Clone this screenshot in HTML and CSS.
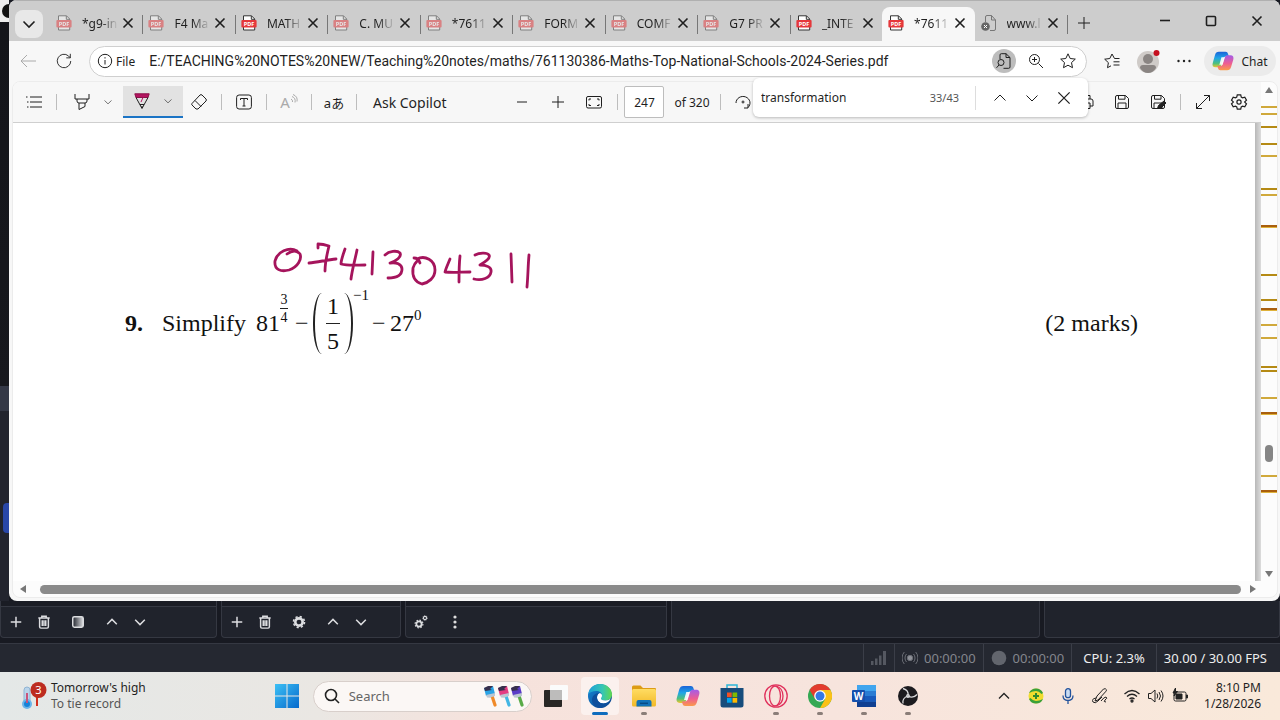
FILE: index.html
```
<!DOCTYPE html>
<html lang="en">
<head>
  <meta charset="UTF-8" />
  <meta name="viewport" content="width=device-width, initial-scale=1" />
  <title>761130386-Maths-Top-National-Schools-2024-Series.pdf</title>
  <link rel="stylesheet" href="styles.css">
</head>
<body>
  <svg class="defs" aria-hidden="true">
    <defs>
      <linearGradient id="cpBlue" x1="0" y1="0" x2="0" y2="1"><stop offset="0" stop-color="#1b63d8"/><stop offset=".4" stop-color="#1fa5e8"/><stop offset=".75" stop-color="#4fc07c"/><stop offset="1" stop-color="#f0c62c"/></linearGradient>
      <linearGradient id="cpPink" x1="0" y1="0" x2="0" y2="1"><stop offset="0" stop-color="#a35be8"/><stop offset=".55" stop-color="#ee5d92"/><stop offset="1" stop-color="#fa9a4a"/></linearGradient>
      <linearGradient id="edgeTop" x1="0" y1="0" x2="1" y2="0"><stop offset="0" stop-color="#1d9fd8"/><stop offset=".6" stop-color="#36c6b4"/><stop offset="1" stop-color="#62d84c"/></linearGradient>
      <linearGradient id="edgeLow" x1="0" y1="0" x2="1" y2="1"><stop offset="0" stop-color="#1689d8"/><stop offset="1" stop-color="#0b3f86"/></linearGradient>
      <linearGradient id="winBlue" x1="0" y1="0" x2="1" y2="1"><stop offset="0" stop-color="#3cc0f5"/><stop offset="1" stop-color="#0669cc"/></linearGradient>
      <linearGradient id="folder" x1="0" y1="0" x2="0" y2="1"><stop offset="0" stop-color="#ffdc62"/><stop offset="1" stop-color="#f2b928"/></linearGradient>
      <linearGradient id="fadeBox"><stop offset="0" stop-color="#20232c"/><stop offset="1" stop-color="#dcdde0"/></linearGradient>
    </defs>
    <symbol id="pdf" viewBox="0 0 16 16"><path d="M2.500 15V.8h8l3.200 3.200V15z" fill="#fff" stroke="#333"/><path d="M10.300.8v3.500h3.500" fill="none" stroke="#333"/><rect x=".4" y="5" width="15.200" height="7.500" rx="1" fill="#e5383b"/><text x="8" y="10.900" font-size="5.500" font-weight="700" text-anchor="middle" fill="#fff">PDF</text></symbol>
    <symbol id="x" viewBox="0 0 16 16"><path d="M3.500 3.500l9 9m0-9l-9 9"/></symbol>
    <symbol id="down" viewBox="0 0 16 16"><path d="M2.500 5.500L8 11l5.500-5.500"/></symbol>
    <symbol id="up" viewBox="0 0 16 16"><path d="M2.500 10.500L8 5l5.500 5.500"/></symbol>
    <symbol id="plus" viewBox="0 0 16 16"><path d="M8 2v12M2 8h12"/></symbol>
    <symbol id="trash" viewBox="0 0 16 16"><path d="M1.500 3.500h13M5.500 3V1.500h5V3M3 4v9.500q0 1.500 1.500 1.500h7q1.500 0 1.500-1.500V4M6 6v6.500M8 6v6.500M10 6v6.500"/></symbol>
    <symbol id="gear" viewBox="0 0 24 24"><path d="M9.700 2.500h4.600l.7 3 1.700 1 3-.9 2.300 4-2.300 2.100v.6l2.300 2.100-2.300 4-3-.9-1.700 1-.7 3H9.700l-.7-3-1.700-1-3 .9-2.300-4 2.300-2.100v-.6L2 9.600l2.300-4 3 .9 1.700-1z"/><circle cx="12" cy="12" r="2.800"/></symbol>
    <symbol id="cog" viewBox="0 0 16 16"><circle cx="8" cy="8" r="4.200" fill="none" stroke="currentColor" stroke-width="3"/><circle cx="8" cy="8" r="6.300" fill="none" stroke="currentColor" stroke-width="1.800" stroke-dasharray="2.500 2.450"/></symbol>
    <symbol id="save" viewBox="0 0 16 16"><path d="M1.500 3q0-1.500 1.500-1.500h8.500l3 3V13q0 1.500-1.500 1.500H3q-1.500 0-1.500-1.500zM4.500 1.500v3.700h6.500V1.500M4 14.500V9h8v5.500"/></symbol>
    <symbol id="copilot" viewBox="0 0 24 24"><path d="M7.500 2h7.200c2 0 2.500 1.300 3 3l.8 2.200h-3.300c-1.700 0-2.600.8-3.100 2.500L10 16.500c-.6 1.800-1.600 2.400-3.300 2.400H4c-3 0-4-2-3.200-4.800l2.400-8.500C4 3.100 5.200 2 7.500 2z" fill="url(#cpBlue)"/><path d="M16.500 22H9.300c-2 0-2.500-1.300-3-3l-.4-1.500h2.900c1.700 0 2.600-.8 3.100-2.500L14 8.100c.6-1.800 1.600-2.400 3.300-2.400H20c3 0 4 2 3.200 4.800l-2.400 8C20 20.900 18.800 22 16.500 22z" fill="url(#cpPink)"/><path d="M10.300 8h3.500l-2.500 8H8z" fill="#fff" opacity=".9"/></symbol>
    <symbol id="brush" viewBox="0 0 12 22"><path d="M0 3l9-2 2 8-9 2z" fill="currentColor"/><path d="M0 3l4-2 5 0-3 3 2 1-7 1z" fill="#37304d"/><path d="M2 10l9-2v3l-3 1-2 .8-3-.3z" fill="#bcc6d2"/></symbol>
  </svg>

  <div class="stage">
    <div class="behind"><i class="app-logo"></i><i class="panel"></i><i class="selected"></i></div>
    <main class="window">
      <header class="tabstrip">
        <button class="tab-menu" aria-label="Tab actions"><svg class="ic bold"><use href="#down"/></svg></button>
        <nav class="tabs">
          <div class="tab dim"><svg class="fav"><use href="#pdf"/></svg><span>*g9-in</span><button aria-label="Close"><svg class="ic bold"><use href="#x"/></svg></button></div>
          <div class="tab dim"><svg class="fav"><use href="#pdf"/></svg><span>F4 Ma</span><button aria-label="Close"><svg class="ic bold"><use href="#x"/></svg></button></div>
          <div class="tab"><svg class="fav"><use href="#pdf"/></svg><span>MATH</span><button aria-label="Close"><svg class="ic bold"><use href="#x"/></svg></button></div>
          <div class="tab dim"><svg class="fav"><use href="#pdf"/></svg><span>C. MU</span><button aria-label="Close"><svg class="ic bold"><use href="#x"/></svg></button></div>
          <div class="tab dim"><svg class="fav"><use href="#pdf"/></svg><span>*7611</span><button aria-label="Close"><svg class="ic bold"><use href="#x"/></svg></button></div>
          <div class="tab dim"><svg class="fav"><use href="#pdf"/></svg><span>FORM</span><button aria-label="Close"><svg class="ic bold"><use href="#x"/></svg></button></div>
          <div class="tab dim"><svg class="fav"><use href="#pdf"/></svg><span>COMF</span><button aria-label="Close"><svg class="ic bold"><use href="#x"/></svg></button></div>
          <div class="tab dim"><svg class="fav"><use href="#pdf"/></svg><span>G7 PR</span><button aria-label="Close"><svg class="ic bold"><use href="#x"/></svg></button></div>
          <div class="tab plain"><svg class="fav"><use href="#pdf"/></svg><span>_INTE</span><button aria-label="Close"><svg class="ic bold"><use href="#x"/></svg></button></div>
          <div class="tab active"><svg class="fav"><use href="#pdf"/></svg><span>*7611</span><button aria-label="Close"><svg class="ic bold"><use href="#x"/></svg></button></div>
          <div class="tab"><svg class="fav" viewBox="0 0 16 16" fill="none" stroke="#777"><path d="M4.500 7V2q0-1.500 1.500-1.500h4.500L14.500 5v9q0 1.500-1.500 1.500H9M10.500.5V5h4"/><circle cx="4.500" cy="11.500" r="4.300" fill="#666" stroke="none"/><path d="M3 10l3 3m0-3l-3 3" stroke="#fff"/></svg><span>www.l</span><button aria-label="Close"><svg class="ic bold"><use href="#x"/></svg></button></div>
        </nav>
        <button class="new-tab" aria-label="New tab"><svg class="ic"><use href="#plus"/></svg></button>
        <div class="caption">
          <button aria-label="Minimize"><svg class="ic bold" viewBox="0 0 16 16"><path d="M3 7.500h10"/></svg></button>
          <button aria-label="Maximize"><svg class="ic bold" viewBox="0 0 16 16"><rect x="3.500" y="3.500" width="9" height="9" rx="1"/></svg></button>
          <button aria-label="Close window"><svg class="ic bold"><use href="#x"/></svg></button>
        </div>
      </header>

      <div class="address">
        <button class="off" aria-label="Back"><svg class="ic" viewBox="0 0 16 16"><path d="M16 8H1m6-6L1 8l6 6"/></svg></button>
        <button aria-label="Refresh"><svg class="ic lg" viewBox="0 0 20 20"><path d="M17.500 10a7.500 7.500 0 1 1-2.500-5.600l2 2M17 2v4.500h-4.500"/></svg></button>
        <div class="omnibox">
          <svg class="ic" viewBox="0 0 16 16"><circle cx="8" cy="8" r="6.700"/><path d="M8 7v4.500M8 4.200v1.300"/></svg>
          <label for="url">File</label>
          <input id="url" type="text" value="E:/TEACHING%20NOTES%20NEW/Teaching%20notes/maths/761130386-Maths-Top-National-Schools-2024-Series.pdf">
          <button class="round" aria-label="Find on page"><svg class="ic" viewBox="0 0 16 16"><path d="M4 6V2q0-1.300 1.300-1.300H10L14 4.500V14q0 1.300-1.300 1.300H7.500M10 .7v3.800h4"/><circle cx="5" cy="9.500" r="3"/><path d="M3 12l-2.500 2.800"/></svg></button>
          <button aria-label="Zoom"><svg class="ic" viewBox="0 0 16 16"><circle cx="6.500" cy="6.500" r="5"/><path d="M10.500 10.500L15 15M6.500 4v5M4 6.500h5"/></svg></button>
          <button aria-label="Add to favorites"><svg class="ic" viewBox="0 0 16 16"><path d="M8 .8l2.200 4.700 5.100.6-3.800 3.500 1 5.100L8 12.200l-4.500 2.500 1-5.100L.7 6.100l5.100-.6z"/></svg></button>
        </div>
        <button aria-label="Favorites"><svg class="ic" viewBox="0 0 16 16"><path d="M15.500 5.500h-5L8 1 5.800 5.500.7 6.200l3.700 3.500-.9 5L7 12.800M9.500 8.800h6M9.500 12h6"/></svg></button>
        <button class="profile" aria-label="Profile"><svg viewBox="0 0 24 24"><circle cx="12" cy="13" r="11" fill="#cfcbc8"/><circle cx="12" cy="10" r="5" fill="#8a8583"/><path d="M4 19q0-3 3-3h10q3 0 3 3-3 5-8 5t-8-5z" fill="#8a8583"/><circle cx="20.500" cy="4" r="3" fill="#c50f1f"/></svg></button>
        <button aria-label="Settings and more"><svg class="ic" viewBox="0 0 16 16"><g fill="#222" stroke="none"><circle cx="2.500" cy="8" r="1.200"/><circle cx="8" cy="8" r="1.200"/><circle cx="13.500" cy="8" r="1.200"/></g></svg></button>
        <button class="chat"><svg><use href="#copilot"/></svg>Chat</button>
      </div>

      <section class="viewer">
        <div class="document">
          <div class="toolbar">
            <button aria-label="Contents"><svg class="ic" viewBox="0 0 16 16"><path d="M4 3h12M4 8h12M4 13h12M0 3h1.500M1 8h1.500M1 13h1.500"/></svg></button>
            <hr>
            <button class="split" aria-label="Highlight"><svg class="ic" viewBox="0 0 16 16"><path d="M1 0v5h14V0M3 5v2q0 2 2 2h6q2 0 2-2V5M5 9v6.500l6-3V9"/></svg><svg class="ic sm"><use href="#down"/></svg></button>
            <button class="split on" aria-label="Draw"><svg class="ic" viewBox="0 0 16 16"><path d="M.8.800h14.400L14 4.500H2z" fill="#b31560" stroke="#8c1049"/><path d="M2 4.500l6 11 6-11M6 11.500h4M8 13v2"/><path d="M9 4.500L7 9" stroke="#b31560"/></svg><svg class="ic sm"><use href="#down"/></svg></button>
            <button aria-label="Erase"><svg class="ic" viewBox="0 0 16 16"><path d="M1 9.500L9 1q1-.8 2 0l4 4q.8 1 0 2l-8 8H5l-4-4q-.7-.8 0-1.500zM4 6.500l6 6"/></svg></button>
            <hr>
            <button aria-label="Add text"><svg class="ic" viewBox="0 0 16 16"><rect x=".6" y="1" width="14.800" height="14" rx="2.500"/><path d="M4.500 6V4.500h7V6M8 4.500V12M6.500 12h3"/></svg></button>
            <hr>
            <button class="off read" aria-label="Read aloud">A<svg viewBox="0 0 8 10" fill="none" stroke="#aaa"><path d="M1 5q2 1 1.500 3M2 2.500q4 1.500 3 6M3 .5q5 2 4 7"/></svg></button>
            <hr>
            <button class="translate" aria-label="Translate">aあ</button>
            <hr>
            <button class="ask">Ask Copilot</button>
            <div class="zooming">
              <button aria-label="Zoom out"><svg class="ic" viewBox="0 0 16 16"><path d="M3 8h10"/></svg></button>
              <button aria-label="Zoom in"><svg class="ic"><use href="#plus"/></svg></button>
              <button aria-label="Fit to page"><svg class="ic" viewBox="0 0 16 16"><rect x=".5" y="2.500" width="15" height="11.500" rx="1.500"/><path d="M3 6.500V5h2M11 5h2v1.500M13 10v1.500h-2M5 11.500H3V10"/></svg></button>
              <hr>
              <input id="page" type="text" value="247"><label for="page">of 320</label>
              <hr>
              <button class="rotate" aria-label="Rotate"><svg class="ic" viewBox="0 0 16 16"><path d="M1 9a7 6.500 0 1 1 12 4.500M13 10v4H9"/><circle cx="8" cy="8" r="1"/></svg></button>
            </div>
            <div class="file-tools">
              <button aria-label="Print"><svg class="ic" viewBox="0 0 16 16"><path d="M4 5V1.500h8V5M4 12H1V7q0-2 2-2h10q2 0 2 2v5h-3M4 9h8v5.500H4z"/></svg></button>
              <button aria-label="Save"><svg class="ic"><use href="#save"/></svg></button>
              <button aria-label="Save as"><svg class="ic" viewBox="0 0 16 16"><use href="#save"/><path d="M7.500 14.500l1-3L14 7l2 2-5 5z" fill="#222"/></svg></button>
              <hr>
              <button aria-label="Full screen"><svg class="ic" viewBox="0 0 16 16"><path d="M1.500 14.500l13-13M9 1.500h5.500V7M1.500 9v5.500H7"/></svg></button>
              <button class="prefs" aria-label="Settings"><svg class="ic lg"><use href="#gear"/></svg></button>
            </div>
          </div>

          <div class="canvas">
            <article class="sheet">
              <svg class="ink" viewBox="272 240 264 50" role="img" aria-label="0741304311">
                <path d="M287 253c4-3 9-4 12-1M297 250c-8-5-20 1-22 10-1 9 6 11 14 9 9-3 13-11 11-16"/>
                <path d="M318 247v-4c4 0 8 1 11 2-2 8-4 17-4 25M309 262c9-1 18-3 27-4"/>
                <path d="M345 248c-2 6-4 11-4 15 7 2 16 1 24 1M357 249c-2 10-5 20-6 29"/>
                <path d="M373 251l-1 22"/>
                <path d="M385 254c4-4 12-5 15-2 2 4-4 8-10 10 6-1 12 1 12 6 0 7-7 9-14 9"/>
                <path d="M414 257c3 0 5 2 6 5M417 258c8-4 18 1 18 11 0 8-7 13-13 14-7-2-10-8-9-16 1-4 3-6 5-8"/>
                <path d="M450 258c-2 5-4 9-5 13 8 1 17 0 25 0M460 255c-1 9-1 18-1 26"/>
                <path d="M475 254c4-2 12-3 14 0s-4 7-9 10c6 0 12 2 11 7-1 6-9 9-17 7"/>
                <path d="M511 253l1 28M529 254c-1 11-1 21-2 32"/>
              </svg>
              <div class="question">
                <b>9.</b>
                <span class="word">Simplify</span>
                <span class="math">
                  <span>81</span>
                  <span class="frac power"><span>3</span><span>4</span></span>
                  <span class="op">−</span>
                  <span class="paren open"></span>
                  <span class="frac"><span>1</span><span>5</span></span>
                  <span class="paren close"></span>
                  <span class="exp high">−1</span>
                  <span class="op">−</span>
                  <span>27</span>
                  <span class="exp">0</span>
                </span>
                <span class="marks">(2 marks)</span>
              </div>
            </article>
          </div>
          <div class="hscroll"><i class="arrow left"></i><i class="thumb"></i><i class="arrow right"></i></div>
        </div>

        <div class="vscroll">
          <i class="arrow top"></i>
          <div class="hits">
            <i style="top:5.2%"></i><i style="top:6.6%"></i><i class="dark" style="top:9.2%"></i><i class="dark" style="top:12.6%"></i><i style="top:15%"></i>
            <i class="dark" style="top:21.5%"></i><i style="top:22.7%"></i><i class="deep" style="top:29%"></i><i class="dark" style="top:38.8%"></i>
            <i class="dark" style="top:43.7%"></i><i class="deep" style="top:45.5%"></i><i style="top:48.8%"></i><i style="top:51.2%"></i>
            <i class="dark" style="top:57%"></i><i class="dark" style="top:57.9%"></i><i style="top:63.2%"></i><i class="deep" style="top:66.3%"></i>
            <i style="top:78.8%"></i><i class="deep" style="top:81.8%"></i>
            <b class="grip" style="top:72.9%"></b>
          </div>
          <i class="arrow bottom"></i>
        </div>
      </section>

      <form class="findbar">
        <input type="text" aria-label="Find on page" value="transformation">
        <span>33/43</span>
        <hr>
        <button type="button" aria-label="Previous"><svg class="ic"><use href="#up"/></svg></button>
        <button type="button" aria-label="Next"><svg class="ic"><use href="#down"/></svg></button>
        <button type="button" aria-label="Close find"><svg class="ic big"><use href="#x"/></svg></button>
      </form>
    </main>
  </div>

  <section class="docks">
    <div class="dock scenes">
      <button aria-label="Add scene"><svg class="ic"><use href="#plus"/></svg></button>
      <button aria-label="Remove scene"><svg class="ic"><use href="#trash"/></svg></button>
      <button class="wide" aria-label="Scene filters"><svg class="ic" viewBox="0 0 16 16"><rect x="2" y="2" width="12" height="12" rx="2" fill="url(#fadeBox)"/></svg></button>
      <button aria-label="Move up"><svg class="ic"><use href="#up"/></svg></button>
      <button aria-label="Move down"><svg class="ic"><use href="#down"/></svg></button>
    </div>
    <div class="dock sources">
      <button aria-label="Add source"><svg class="ic"><use href="#plus"/></svg></button>
      <button aria-label="Remove source"><svg class="ic"><use href="#trash"/></svg></button>
      <button class="wide" aria-label="Properties"><svg class="ic"><use href="#cog"/></svg></button>
      <button aria-label="Move up"><svg class="ic"><use href="#up"/></svg></button>
      <button aria-label="Move down"><svg class="ic"><use href="#down"/></svg></button>
    </div>
    <div class="dock mixer">
      <button aria-label="Advanced audio"><svg class="ic" viewBox="0 0 16 16"><use href="#cog" x="1" y="5" width="10" height="10"/><use href="#cog" x="9" y="1" width="6" height="6"/></svg></button>
      <button class="wide" aria-label="Mixer menu"><svg class="ic" viewBox="0 0 16 16"><g fill="#ddd" stroke="none"><circle cx="8" cy="3" r="1.600"/><circle cx="8" cy="8" r="1.600"/><circle cx="8" cy="13" r="1.600"/></g></svg></button>
    </div>
    <div class="dock transitions"></div>
    <div class="dock controls"></div>
  </section>

  <section class="status">
    <div class="cell"><svg viewBox="0 0 16 16" fill="#555861"><path d="M0 11h2.500v4H0zM4 8.500h2.500V15H4zM8 5.500h2.500V15H8zM12 1h3v14h-3z"/></svg></div>
    <div class="cell muted"><svg viewBox="0 0 16 16" fill="none" stroke="#6b6e76"><circle cx="8" cy="8" r="2.700" fill="#8f9198"/><path d="M4.500 4a6 6 0 0 0 0 8M11.500 4a6 6 0 0 1 0 8M2.300 2a9 9 0 0 0 0 12M13.700 2a9 9 0 0 1 0 12"/></svg>00:00:00</div>
    <div class="cell muted"><svg viewBox="0 0 16 16"><circle cx="8" cy="8" r="7.300" fill="#62656d"/></svg>00:00:00</div>
    <div class="cell cpu">CPU: 2.3%</div>
    <div class="cell fps">30.00 / 30.00 FPS</div>
  </section>

  <footer class="taskbar">
    <button class="weather">
      <svg viewBox="-3 0 28 28"><rect x="2" y="5" width="6" height="17" rx="3" fill="#b9d4ea" stroke="#8fb4d3"/><circle cx="5" cy="22" r="5" fill="#69b4ea"/><circle cx="5" cy="22" r="3" fill="#1683d8"/><path d="M5 11v10" stroke="#c9547b" stroke-width="2"/><path d="M15 14v10" stroke="#d3301f" stroke-width="2"/><circle cx="16.500" cy="8" r="8" fill="#bd2c20"/><text x="16.500" y="12" font-size="11" text-anchor="middle" fill="#fff">3</text></svg>
      <span>Tomorrow's high<br><small>To tie record</small></span>
    </button>
    <div class="apps">
      <button aria-label="Start"><svg viewBox="0 0 24 24" fill="url(#winBlue)"><path d="M0 0h11.500v11.500H0zM12.500 0H24v11.500H12.500zM0 12.500h11.500V24H0zM12.500 12.500H24V24H12.500z"/></svg></button>
      <div class="search">
        <svg viewBox="0 0 16 16" fill="none" stroke="#222" stroke-width="1.600"><circle cx="7" cy="7" r="5.500"/><path d="M11 11l4 4"/></svg>
        <input type="text" aria-label="Search" placeholder="Search">
        <svg class="brushes" viewBox="0 0 40 22"><g stroke-width="3.200" stroke-linecap="round"><path d="M8 11l3 9" stroke="#f08a28"/><path d="M22 11l3 9" stroke="#43b6e4"/><path d="M35 11l3 9" stroke="#58ab48"/></g><use href="#brush" x="0" width="12" height="22" color="#29a3e6"/><use href="#brush" x="14" width="12" height="22" color="#e43c83"/><use href="#brush" x="27" width="12" height="22" color="#5a3cc8"/></svg>
      </div>
      <button aria-label="Task view"><svg viewBox="0 0 24 24"><rect x="0" y="6" width="18" height="17" rx="1" fill="#292725"/><rect x="6" y="1" width="18" height="15" rx="1" fill="#fbfbfb"/><path d="M6 6h12v10H6z" fill="#bdbcbb"/></svg></button>
      <button class="current" aria-label="Edge"><svg viewBox="0 0 24 24"><circle cx="12" cy="12" r="12" fill="url(#edgeLow)"/><path d="M.2 10C1.500 3.500 6.500 0 12 0c7 0 12 5 12 10.500 0 3.800-3 6-6.500 6-3 0-4.500-1-4.500-2 0-.7 1-1.200 1-3C14 9 11.500 7 8.300 7 4.500 7 1.500 8.500.2 10z" fill="url(#edgeTop)"/><path d="M14 11.500c0 1.800-1 2.300-1 3 0 1 1.500 2 4.500 2 2.200 0 4-.7 5.200-2-1.500 3.300-4.200 4.900-7.200 4.900-4.500 0-6.500-3.400-6.500-6 0-2.300 1.300-3.700 2.700-4.300 1.500.5 2.300 1.400 2.300 2.400z" fill="#fff"/><path d="M9 13.400c0 2.600 2 6 6.500 6 3 0 5.200-1 6.700-3C20 21 16 24 12 24c-5 0-8-4-8-8 0-4 3.300-7 7.700-6.900C10.300 9.700 9 11.100 9 13.400z" fill="#0e4f9c"/></svg></button>
      <button class="open" aria-label="File Explorer"><svg viewBox="0 0 24 24"><path d="M0 3q0-1.500 1.500-1.500h7L11 4h12q1 0 1 1v6H0z" fill="#dd9c14"/><rect y="5" width="24" height="17.500" rx="1.500" fill="url(#folder)"/><path d="M4.500 22.500V18q0-2 2-2h11q2 0 2 2v4.500z" fill="#1272b8"/><path d="M8 19.300h8" stroke="#074b86" stroke-width="1.500"/></svg></button>
      <button aria-label="Copilot"><svg><use href="#copilot"/></svg></button>
      <button aria-label="Store"><svg viewBox="0 0 24 24"><path d="M7 5V1h10v4" fill="none" stroke="#2cb5d8" stroke-width="1.500"/><path d="M.5 4h23v17q0 2.500-2.500 2.500H3Q.5 23.500.5 21z" fill="#174c7c"/><path d="M7 8.500h4.700v4.700H7z" fill="#f25022"/><path d="M12.500 8.500h4.700v4.700h-4.700z" fill="#7fba00"/><path d="M7 14h4.700v4.700H7z" fill="#00a4ef"/><path d="M12.500 14h4.700v4.700h-4.700z" fill="#ffb900"/></svg></button>
      <button class="open" aria-label="Opera GX"><svg viewBox="0 0 24 24" fill="none" stroke="#e0315c" stroke-width="1.300"><circle cx="12" cy="12" r="11.200"/><ellipse cx="11" cy="12" rx="5.500" ry="10"/><path d="M12 2q7 2 7 10t-7 10"/></svg></button>
      <button class="open" aria-label="Chrome"><svg viewBox="0 0 24 24"><circle cx="12" cy="12" r="12" fill="#34a853"/><path d="M1.600 6A12 12 0 0 1 22.400 6H12L7 15z" fill="#e33b2e"/><path d="M22.400 6A12 12 0 0 1 12 24l5.200-9L12 6z" fill="#fbc116"/><circle cx="12" cy="12" r="5.800" fill="#fff"/><circle cx="12" cy="12" r="4.500" fill="#3578e5"/></svg></button>
      <button class="open" aria-label="Word"><svg viewBox="0 0 24 24"><rect x="5" y="1" width="19" height="22" rx="1.500" fill="#2b7cd3"/><path d="M5 1h19v6H5z" fill="#41a5ee"/><path d="M5 17.500h19V23H5z" fill="#103f91"/><path d="M5 12h19v5.500H5z" fill="#185abd"/><rect y="6" width="13" height="12" rx="1" fill="#1550ad"/><text x="6.500" y="15.500" font-size="10" font-weight="700" text-anchor="middle" fill="#fff">W</text></svg></button>
      <button class="open" aria-label="OBS Studio"><svg viewBox="0 0 24 24"><circle cx="12" cy="12" r="10" fill="#1c1b1f"/><g fill="none" stroke="#d8d8da" stroke-width="1.300"><path d="M12 12q1-6-5-7.500M12 12q5 3 9-1.500M12 12q-6 2-5 7.500"/><circle cx="12" cy="12" r="1.300"/></g></svg></button>
    </div>
    <div class="tray">
      <svg viewBox="0 0 16 16" fill="none" stroke="#222" stroke-width="1.300"><path d="M3 10.500l5-5 5 5"/></svg>
      <svg viewBox="0 0 16 16"><circle cx="8" cy="8" r="7.500" fill="#f1dc2e"/><path d="M1 5Q3 .5 8 .5q5 0 7 4.500l-1.500 1Q11 3 8 3 5 3 1 5zM15 11q-2 4.500-7 4.500-5 0-7-4.500l1.500-1Q5 13 8 13q3 0 7-2z" fill="#3aa03a"/><path d="M8 5v6M5 8h6" stroke="#2f8a2d" stroke-width="2"/></svg>
      <svg viewBox="0 0 16 16" fill="none" stroke="#23539c" stroke-width="1.300"><rect x="5.500" y=".7" width="5" height="9" rx="2.500" fill="#c9dcf2"/><path d="M3 7.500q0 5 5 5t5-5M8 12.500V16"/></svg>
      <svg viewBox="0 0 16 16" fill="none" stroke="#222"><path d="M5 8l6.500-7q2-1 3 .8 0 1-1 2L6 12l-3 1zM4 10q-5 1-3 4 2 2 5-1l4-4M9 13q3-4 5-4 2 1-1 3-2 2 1 2"/></svg>
      <span class="quick">
        <svg viewBox="0 0 16 16" fill="none" stroke="#222" stroke-width="1.300"><path d="M.5 6Q8-1 15.500 6M3 8.500Q8 4 13 8.500M5.500 11Q8 9 10.500 11"/><circle cx="8" cy="13" r="1"/></svg>
        <svg viewBox="0 0 16 16" fill="none" stroke="#222"><path d="M.5 5.500H3L7 2v12l-4-3.500H.5zM9 5.500q1.500 2.500 0 5M11 4q3 4 0 8M13 2.500q4 5.500 0 11"/></svg>
        <svg viewBox="0 0 16 16" fill="none" stroke="#222"><rect x="2" y="4" width="12" height="9" rx="1.500"/><path d="M14.500 7v3h1V7z"/><path d="M4 6h6v5H4z" fill="#222"/><path d="M3.500 0L1 5h2L2 8l3.500-4.500h-2z" fill="#222"/></svg>
      </span>
      <time datetime="2026-01-28T20:10">8:10 PM<br>1/28/2026</time>
    </div>
  </footer>
</body>
</html>
```
FILE: styles.css
```
* {
  box-sizing: border-box;
}
body {
  margin: 0;
  min-height: 100vh;
  display: flex;
  flex-direction: column;
  font-family: "Noto Sans", "Noto Sans CJK JP", sans-serif;
  font-size: 12px;
  color: #1f1f1f;
  background: #181a22;
}
button, input {
  font: inherit;
  color: inherit;
  background: none;
  border: none;
  padding: 0;
  outline: none;
}
button {
  display: flex;
  align-items: center;
  justify-content: center;
  flex: none;
}
hr {
  width: 1px;
  height: 16px;
  margin: 0 6px;
  border: none;
  background: #bdbdbd;
  flex: none;
}
i {
  display: block;
}
.defs {
  position: absolute;
  width: 0;
  height: 0;
}
.ic {
  width: 16px;
  height: 16px;
  flex: none;
  fill: none;
  stroke: currentColor;
  stroke-width: 1;
}
.ic.bold {
  stroke-width: 1.6;
}
.ic.sm {
  width: 10px;
  height: 10px;
}
.ic.lg {
  width: 18px;
  height: 18px;
}
.ic.big {
  width: 20px;
  height: 20px;
}
.off {
  color: #aaa;
}

/* window area */
.stage {
  flex: 1;
  display: flex;
  min-width: 0;
}
.behind {
  width: 9px;
  flex: none;
  display: flex;
  flex-direction: column;
  background: linear-gradient(#ededed 22px, #14151a 22px, #17181d 65%, #22242e 68%);
  overflow: hidden;
}
.behind .app-logo {
  width: 14px;
  height: 14px;
  margin: 4px 0 0 2px;
  border-radius: 50%;
  background: #111;
  flex: none;
}
.behind .panel {
  height: 25px;
  margin-top: 368px;
  background: #343846;
}
.behind .selected {
  height: 30px;
  margin: 92px 0 0 3px;
  border-radius: 4px 0 0 4px;
  background: #2947a9;
}
.window {
  position: relative;
  flex: 1;
  min-width: 0;
  display: flex;
  flex-direction: column;
  background: #f7f7f7;
  border-radius: 8px;
  overflow: hidden;
}

/* tabs */
.tabstrip {
  display: flex;
  height: 41px;
  padding-left: 6px;
  background: #cdcdcd;
  border-top: 1px solid #b0b0b0;
}
.tab-menu {
  width: 28px;
  height: 28px;
  margin: 9px 7px 0 0;
  border-radius: 8px;
  background: #e8e8e8;
}
.tabs {
  flex: 1;
  display: flex;
  min-width: 0;
  padding-top: 6px;
}
.tab {
  flex: 1;
  min-width: 0;
  display: flex;
  align-items: center;
  padding-left: 6px;
  padding-bottom: 2px;
  position: relative;
}
.tab::after {
  content: "";
  position: absolute;
  right: -1px;
  top: 8px;
  width: 1px;
  height: 19px;
  background: #777;
}
.tab.active::after, .tab.plain::after {
  display: none;
}
.tab span {
  width: 38px;
  margin-left: 10px;
  flex: none;
  white-space: nowrap;
  mask-image: linear-gradient(90deg, #000 50%, transparent 95%);
}
.tab.active {
  background: #f7f7f7;
  border-radius: 8px 8px 0 0;
}
.fav {
  width: 16px;
  height: 16px;
  flex: none;
}
.tab.dim .fav {
  opacity: 0.5;
}
.new-tab {
  width: 34px;
  padding-top: 4px;
}
.caption {
  display: flex;
  width: 179px;
  padding: 0 0 0 41px;
}
.caption button {
  width: 46px;
}

/* address bar */
.address {
  display: flex;
  align-items: center;
  height: 40px;
  padding: 0 4px 0 1px;
}
.address > button {
  width: 36px;
  height: 30px;
}
.omnibox {
  flex: 1;
  min-width: 0;
  display: flex;
  align-items: center;
  height: 31px;
  margin: 0 7px;
  padding-left: 7px;
  padding-right: 2px;
  background: #fff;
  border: 1px solid #cfcfcf;
  border-radius: 16px;
}
.omnibox label {
  margin: 0 14px 0 3px;
}
.omnibox input {
  flex: 1;
  min-width: 0;
  font-family: Roboto, sans-serif;
  font-size: 14px;
}
.omnibox button {
  width: 24px;
  height: 24px;
  margin: 0 4px;
}
.omnibox .round {
  border-radius: 50%;
  background: #bdbdbd;
}
.profile svg {
  width: 24px;
  height: 24px;
}
.address .chat {
  width: 72px;
  margin-left: 2px;
  gap: 7px;
  border-radius: 15px;
  background: #ebebeb;
}
.chat svg {
  width: 22px;
  height: 22px;
}

/* pdf viewer */
.viewer {
  flex: 1;
  display: flex;
  min-height: 0;
  margin: 0 2px 3px 3px;
  border: 1px solid #ececec;
  border-radius: 8px;
  overflow: hidden;
  background: #fcfcfc;
}
.document {
  flex: 1;
  min-width: 0;
  display: flex;
  flex-direction: column;
}
.toolbar {
  display: flex;
  align-items: center;
  height: 41px;
  padding-left: 5px;
  background: #f7f7f7;
  border-bottom: 1px solid #cfcfcf;
}
.toolbar button {
  width: 32px;
  height: 32px;
}
.toolbar .split {
  width: 60px;
  gap: 13px;
}
.toolbar .on {
  background: #e2e2e2;
  border-bottom: 2px solid #1b74c5;
}
.toolbar .read {
  font-size: 15px;
}
.read svg {
  width: 8px;
  height: 10px;
  margin-bottom: 6px;
}
.toolbar .translate {
  font-size: 13px;
}
.toolbar .ask {
  width: auto;
  margin-left: 10px;
  font-size: 14px;
}
.zooming {
  display: flex;
  align-items: center;
  margin-left: 58px;
}
.zooming button {
  margin: 0 2px;
}
.zooming hr {
  margin-left: 5px;
}
.zooming .rotate {
  margin: 0;
}
.zooming input {
  width: 40px;
  height: 32px;
  text-align: center;
  background: #fff;
  border: 1px solid #bdbdbd;
  border-radius: 2px;
}
.zooming label {
  margin: 0 5px 0 10px;
}
.file-tools {
  display: flex;
  align-items: center;
  margin-left: auto;
  padding-right: 4px;
}
.file-tools button {
  margin: 0 2px;
}
.file-tools hr {
  margin: 0 4px;
}
.prefs .ic {
  stroke-width: 1.6;
}
.canvas {
  flex: 1;
  display: flex;
  padding-right: 6px;
  background: linear-gradient(90deg, #b8b8b8, #dcdcdc) right / 6px 100% no-repeat;
}
.sheet {
  flex: 1;
  min-width: 0;
  padding: 118px 117px 0 112px;
  background: #fff;
}
.ink {
  display: block;
  width: 264px;
  height: 50px;
  margin-left: 147px;
  fill: none;
  stroke: #a5145c;
  stroke-width: 2.8;
  stroke-linecap: round;
  stroke-linejoin: round;
}
.question {
  display: flex;
  align-items: center;
  height: 65px;
  font-family: "Liberation Serif", serif;
  font-size: 24px;
  color: #111;
}
.word {
  margin: 0 10px 0 19px;
}
.math {
  display: flex;
  align-items: center;
}
.marks {
  margin-left: auto;
}
.frac {
  display: flex;
  flex-direction: column;
  width: 14px;
  margin: 0 4px;
  line-height: 34px;
  text-align: center;
}
.frac span:first-child {
  border-bottom: 1px solid #222;
}
.frac.power {
  width: 8px;
  margin: 0 7px 30px 0;
  font-size: 14px;
  line-height: 17px;
}
.op {
  width: 14px;
  margin-right: 4px;
}
.paren {
  width: 9px;
  height: 61px;
}
.open.paren {
  border-left: 2px solid #222;
  border-radius: 9px 0 0 9px / 30px 0 0 30px;
}
.close.paren {
  border-right: 2px solid #222;
  border-radius: 0 9px 9px 0 / 0 30px 30px 0;
}
.exp {
  font-size: 15px;
  margin-bottom: 17px;
}
.exp.high {
  margin: 0 3px 56px 0;
}

/* scroll bars */
.arrow {
  width: 0;
  height: 0;
  border: 4px solid transparent;
  flex: none;
}
.arrow.left {
  border-right: 6px solid #777;
}
.arrow.right {
  border-left: 6px solid #777;
}
.arrow.top {
  border-bottom: 6px solid #777;
}
.arrow.bottom {
  border-top: 6px solid #777;
}
.hscroll {
  display: flex;
  align-items: center;
  height: 16px;
  padding: 0 1px 0 3px;
}
.thumb {
  flex: 1;
  height: 9px;
  margin: 0 9px 0 14px;
  border-radius: 5px;
  background: #8a8a8a;
}
.vscroll {
  position: relative;
  width: 16px;
  display: flex;
  flex-direction: column;
  align-items: center;
  justify-content: space-between;
  padding: 1px 0 16px;
}
.hits {
  position: absolute;
  inset: -2px 0 16px;
}
.hits i, .hits b {
  position: absolute;
  left: 0;
  width: 16px;
  height: 2px;
  background: #d0a93b;
}
.hits .dark {
  background: #b58a14;
}
.hits .deep {
  height: 3px;
  background: linear-gradient(#a95f0e 60%, #dfb23b 60%);
}
.hits .grip {
  left: 4px;
  width: 8px;
  height: 17px;
  border-radius: 4px;
  background: #858585;
}

/* find on page, floats over the toolbar */
.findbar {
  position: absolute;
  top: 78px;
  right: 192px;
  display: flex;
  align-items: center;
  width: 335px;
  height: 39px;
  padding: 0 8px;
  background: #fff;
  border-radius: 6px;
  box-shadow: 0 1px 3px rgba(0,0,0,0.25);
}
.findbar input {
  flex: 1;
  min-width: 0;
}
.findbar span {
  font-size: 11px;
  color: #555;
}
.findbar hr {
  height: 24px;
  margin: 0 8px 0 16px;
  background: #ddd;
}
.findbar button {
  width: 32px;
  height: 32px;
}

/* recorder docks and status bar */
.docks {
  display: flex;
  gap: 4px;
  height: 42px;
  padding-bottom: 5px;
}
.dock {
  display: flex;
  align-items: center;
  padding: 5px 0 0 1px;
  color: #dcdde0;
  background: linear-gradient(#1a1c24 5px, #353842 5px, #353842 6px, #20232c 6px);
  border: 1px solid #353842;
  border-top: none;
  border-radius: 0 0 4px 4px;
}
.dock .ic {
  width: 14px;
  height: 14px;
  stroke-width: 1.7;
}
.dock button {
  width: 28px;
}
.dock .wide {
  width: 40px;
}
.scenes {
  flex: 214;
}
.sources {
  flex: 177;
}
.mixer {
  flex: 259;
}
.mixer .ic {
  width: 16px;
  height: 16px;
}
.transitions {
  flex: 366;
  background: #20232c;
}
.controls {
  flex: 233;
  background: #20232c;
}
.status {
  display: flex;
  justify-content: flex-end;
  height: 29px;
  padding-right: 4px;
  font-size: 13px;
  background: #252831;
  border-top: 1px solid #353842;
  color: #eee;
}
.cell {
  display: flex;
  align-items: center;
  gap: 6px;
  padding: 0 7px;
  border-left: 1px solid #3b3e48;
}
.cell.cpu {
  padding: 0 11px;
}
.cell.fps {
  padding-right: 9px;
}
.cell svg {
  width: 16px;
  height: 16px;
}
.muted {
  color: #84868d;
}

/* taskbar */
.taskbar {
  display: flex;
  align-items: center;
  height: 48px;
  padding: 0 19px;
  background: linear-gradient(90deg, #e4e8e7, #eae7e3 25%, #f6e2dc 38%, #f7e4dd 65%, #f9e9da);
}
.weather {
  gap: 4px;
  font-size: 12px;
  line-height: 16px;
  text-align: left;
}
.weather svg {
  width: 28px;
  height: 28px;
}
.weather small {
  font-size: 12px;
  color: #555;
}
.apps {
  display: flex;
  align-items: center;
  margin: 0 auto 0 119px;
}
.apps button {
  position: relative;
  width: 38px;
  height: 38px;
  margin: 0 3px;
}
.apps svg {
  width: 24px;
  height: 24px;
}
.apps .current {
  background: #fbf1ee;
  border-radius: 4px;
}
.apps .current::after, .apps .open::after {
  content: "";
  position: absolute;
  bottom: 0;
  width: 6px;
  height: 3px;
  border-radius: 2px;
  background: #8a7d78;
}
.apps .current::after {
  width: 16px;
  background: #0f6cbd;
}
.search {
  display: flex;
  align-items: center;
  width: 219px;
  height: 31px;
  margin: 0 2px 0 4px;
  padding: 0 6px 0 10px;
  border: 1px solid #d8cfcb;
  border-radius: 16px;
  background: #fbf7f5;
}
.search svg {
  width: 16px;
  height: 16px;
}
.search input {
  flex: 1;
  min-width: 0;
  margin-left: 9px;
  font-size: 13px;
}
.search input::placeholder {
  color: #666;
}
.search .brushes {
  width: 42px;
  height: 22px;
}
.tray {
  display: flex;
  align-items: center;
  gap: 16px;
}
.tray svg {
  width: 16px;
  height: 16px;
}
.quick {
  display: flex;
  gap: 8px;
}
.tray time {
  text-align: right;
  line-height: 16px;
}
```
